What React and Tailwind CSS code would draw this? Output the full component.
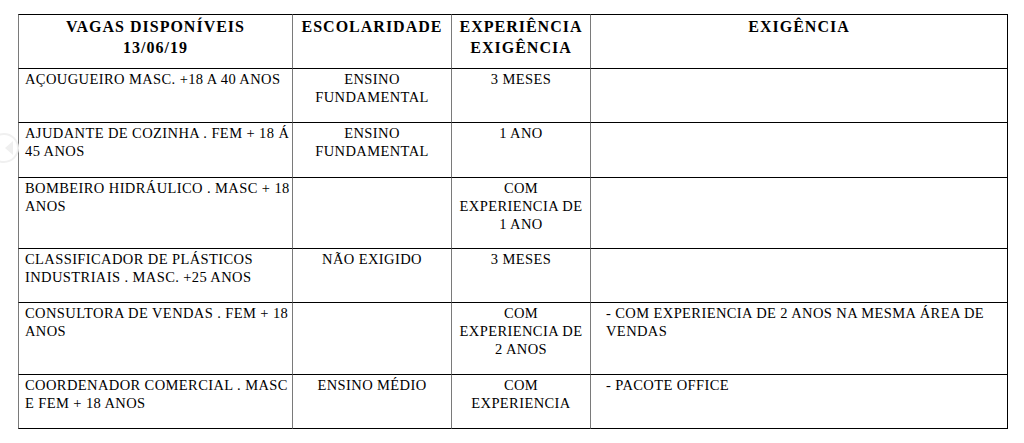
import React from "react";

const rows = [
  { h: "h-[54px]", c1: ["AÇOUGUEIRO MASC. +18 A 40 ANOS"], c2: ["ENSINO", "FUNDAMENTAL"], c3: ["3 MESES"], c4: [] },
  { h: "h-[55px]", c1: ["AJUDANTE DE COZINHA . FEM + 18 Á", "45 ANOS"], c2: ["ENSINO", "FUNDAMENTAL"], c3: ["1 ANO"], c4: [] },
  { h: "h-[71px]", c1: ["BOMBEIRO HIDRÁULICO . MASC + 18", "ANOS"], c2: [], c3: ["COM", "EXPERIENCIA DE", "1 ANO"], c4: [] },
  { h: "h-[54px]", c1: ["CLASSIFICADOR DE PLÁSTICOS", "INDUSTRIAIS . MASC. +25 ANOS"], c2: ["NÃO EXIGIDO"], c3: ["3 MESES"], c4: [] },
  { h: "h-[72px]", c1: ["CONSULTORA DE VENDAS . FEM + 18", "ANOS"], c2: [], c3: ["COM", "EXPERIENCIA DE", "2 ANOS"], c4: ["- COM EXPERIENCIA DE 2 ANOS NA MESMA ÁREA DE", "VENDAS"] },
  { h: "h-[54px]", c1: ["COORDENADOR COMERCIAL . MASC", "E FEM + 18 ANOS"], c2: ["ENSINO MÉDIO"], c3: ["COM", "EXPERIENCIA"], c4: ["- PACOTE OFFICE"] },
];

function Lines({ lines }) {
  return lines.map((l, i) => (
    <div key={i} className="whitespace-nowrap">
      {l}
    </div>
  ));
}

const head = "h-[55px] border-t border-b border-r border-t-black border-b-black text-center font-bold text-[16px] leading-[21px] tracking-[1px] pt-[1px] font-['Liberation_Serif',serif]";
const body = "border-b border-r border-b-black text-[14.5px] leading-[18px] tracking-[0.4px] pt-[1px] font-['Liberation_Serif',serif]";

export default function App() {
  return (
    <div className="relative w-[1024px] h-[443px] bg-white text-black overflow-hidden font-['Liberation_Serif',serif]">
      <div className="absolute left-[-11px] top-[133px] w-[30px] h-[30px] rounded-full border-2 border-[#f0f0f0] flex items-center justify-center">
        <div className="ml-[9px] w-0 h-0 border-y-[7px] border-y-transparent border-r-[8px] border-r-[#efefef]" />
      </div>
      <div className="pt-[14px] pl-[18px]">
        <div className="grid grid-cols-[275px_159px_139px_417px] w-[990px]">
          <div className={`${head} border-l border-l-[#7a7a7a] border-r-[#7a7a7a]`}>
            <div>VAGAS DISPONÍVEIS</div>
            <div>13/06/19</div>
          </div>
          <div className={`${head} border-r-[#7a7a7a]`}>
            <div className="-mx-[6px] whitespace-nowrap">ESCOLARIDADE</div>
          </div>
          <div className={`${head} border-r-[#7a7a7a]`}>
            <div className="-mx-[6px] whitespace-nowrap">EXPERIÊNCIA</div>
            <div>EXIGÊNCIA</div>
          </div>
          <div className={`${head} border-r-black`}>
            <div>EXIGÊNCIA</div>
          </div>

          {rows.map((r, i) => (
            <React.Fragment key={i}>
              <div className={`${r.h} ${body} border-l border-l-[#7a7a7a] border-r-[#7a7a7a] pl-[6px]`}>
                <Lines lines={r.c1} />
              </div>
              <div className={`${r.h} ${body} border-r-[#7a7a7a] text-center`}>
                <Lines lines={r.c2} />
              </div>
              <div className={`${r.h} ${body} border-r-[#7a7a7a] text-center`}>
                <div className="-mx-[4px]">
                  <Lines lines={r.c3} />
                </div>
              </div>
              <div className={`${r.h} ${body} border-r-black pl-[15px]`}>
                <Lines lines={r.c4} />
              </div>
            </React.Fragment>
          ))}
        </div>
      </div>
    </div>
  );
}
